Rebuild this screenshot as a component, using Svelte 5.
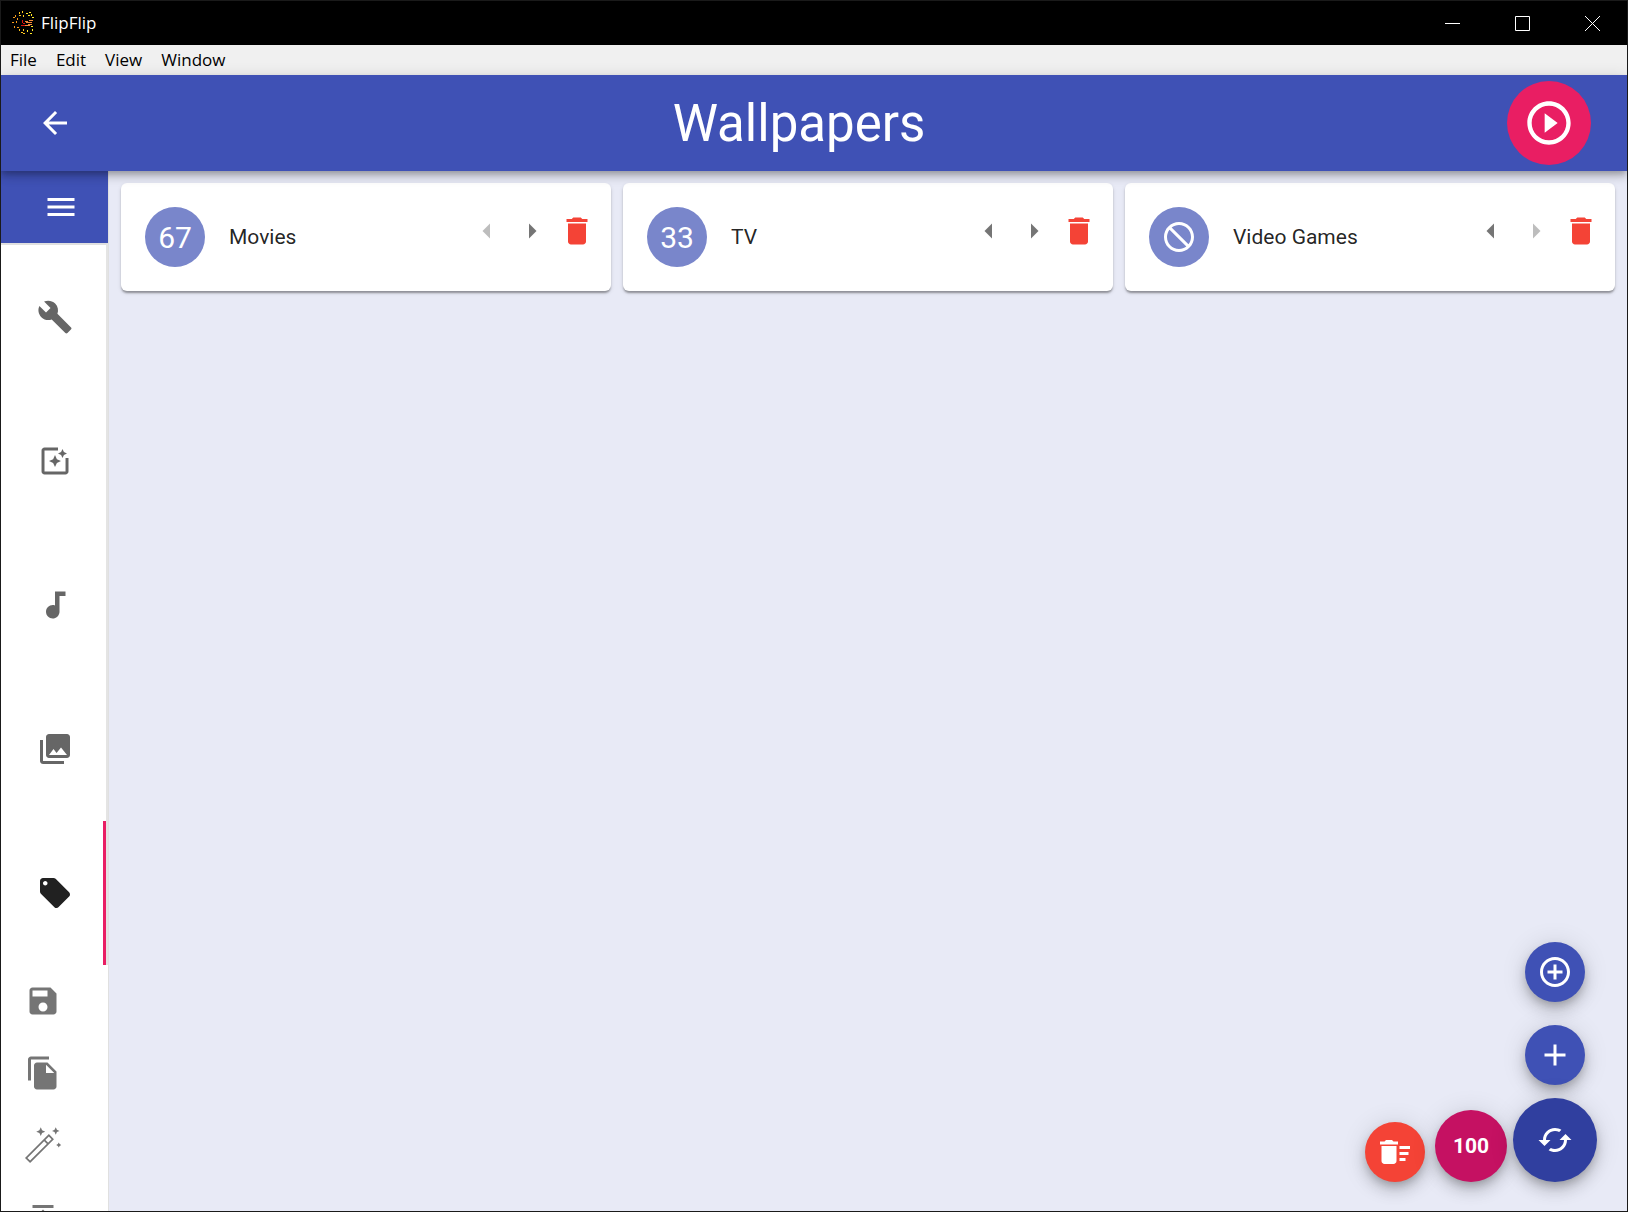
<script>
  const icons = {
    back: 'M20 11H7.83l5.59-5.59L12 4l-8 8 8 8 1.41-1.41L7.83 13H20v-2z',
    menu: 'M3 18h18v-2H3v2zm0-5h18v-2H3v2zm0-7v2h18V6H3z',
    play: 'M10 16.5l6-4.5-6-4.5v9zM12 2C6.48 2 2 6.48 2 12s4.48 10 10 10 10-4.48 10-10S17.52 2 12 2zm0 18c-4.41 0-8-3.59-8-8s3.59-8 8-8 8 3.59 8 8-3.59 8-8 8z',
    left: 'M14 7l-5 5 5 5V7z',
    right: 'M10 17l5-5-5-5v10z',
    trash: 'M6 19c0 1.1.9 2 2 2h8c1.1 0 2-.9 2-2V7H6v12zM19 4h-3.5l-1-1h-5l-1 1H5v2h14V4z',
    block: 'M12 2C17.52 2 22 6.48 22 12s-4.48 10-10 10S2 17.52 2 12 6.48 2 12 2zM20 12c0-4.42-3.58-8-8-8-1.85 0-3.55.63-4.9 1.69L18.31 16.9C19.37 15.55 20 13.85 20 12zM12 20c1.85 0 3.55-.63 4.9-1.69L5.69 7.1C4.63 8.45 4 10.15 4 12c0 4.42 3.58 8 8 8z',
    addCircle: 'M13 7h-2v4H7v2h4v4h2v-4h4v-2h-4V7zm-1-5C6.48 2 2 6.48 2 12s4.48 10 10 10 10-4.48 10-10S17.52 2 12 2zm0 18c-4.41 0-8-3.59-8-8s3.59-8 8-8 8 3.59 8 8-3.59 8-8 8z',
    add: 'M19 13h-6v6h-2v-6H5v-2h6V5h2v6h6v2z',
    cached: 'M19 8l-4 4h3c0 3.31-2.69 6-6 6-1.01 0-1.97-.25-2.8-.7l-1.46 1.46C8.97 19.54 10.43 20 12 20c4.42 0 8-3.58 8-8h3l-4-4zM6 12c0-3.31 2.69-6 6-6 1.01 0 1.97.25 2.8.7l1.46-1.46C15.03 4.46 13.57 4 12 4c-4.42 0-8 3.58-8 8H1l4 4 4-4H6z',
    sweep: 'M15 16h4v2h-4zm0-8h7v2h-7zm0 4h6v2h-6zM3 18c0 1.1.9 2 2 2h6c1.1 0 2-.9 2-2V8H3v10zM14 5h-3l-1-1H6L5 5H2v2h12z',
  };

  const tabs = [
    { name: 'Options', d: 'M22.7 19l-9.1-9.1c.9-2.3.4-5-1.5-6.9-2-2-5-2.4-7.4-1.3L9 6 6 9 1.6 4.7C.4 7.1.9 10.1 2.9 12.1c1.9 1.9 4.6 2.4 6.9 1.5l9.1 9.1c.4.4 1 .4 1.4 0l2.3-2.3c.5-.4.5-1.1.1-1.4z' },
    { name: 'Effects', d: 'M19.02 10v9H5V5h9V3H5.02c-1.1 0-2 .9-2 2v14c0 1.1.9 2 2 2H19c1.1 0 2-.9 2-2v-9h-1.98zM17 10l.94-2.06L20 7l-2.06-.94L17 4l-.94 2.06L14 7l2.06.94zm-3.75.75L12 8l-1.25 2.75L8 12l2.75 1.25L12 16l1.25-2.75L16 12z' },
    { name: 'Audio', d: 'M12 3v9.28c-.47-.17-.97-.28-1.5-.28C8.01 12 6 14.01 6 16.5S8.01 21 10.5 21c2.31 0 4.2-1.75 4.45-4H15V6h4V3h-7z' },
    { name: 'Sources', d: 'M22 16V4c0-1.1-.9-2-2-2H8c-1.1 0-2 .9-2 2v12c0 1.1.9 2 2 2h12c1.1 0 2-.9 2-2zm-11-4l2.03 2.71L16 11l4 5H8l3-4zM2 6v14c0 1.1.9 2 2 2h14v-2H4V6H2z' },
    { name: 'Weights', selected: true, d: 'M21.41 11.58l-9-9C12.05 2.22 11.55 2 11 2H4c-1.1 0-2 .9-2 2v7c0 .55.22 1.05.59 1.42l9 9c.36.36.86.58 1.41.58.55 0 1.05-.22 1.41-.59l7-7c.37-.36.59-.86.59-1.41 0-.55-.23-1.06-.59-1.42zM5.5 7C4.67 7 4 6.33 4 5.5S4.67 4 5.5 4 7 4.67 7 5.5 6.33 7 5.5 7z' },
  ];

  const wand =
    'M15.9 4.7L19.3 8.1 3.4 24 0 20.6zM15.9 6.3L1.6 20.6 3.4 22.4 17.7 8.1zM12 8.7l.8-.8 3 3-.8.8zM10.5.2l.9 2 2.1.9-2.1.9-.9 2-.9-2-2.1-.9 2.1-.9zM20.5.1l.8 1.7 1.7.8-1.7.8-.8 1.7-.8-1.7-1.7-.8 1.7-.8zM22.5 10.3l.6 1.1 1.1.6-1.1.6-.6 1.1-.6-1.1-1.1-.6 1.1-.6z';

  const actions = [
    { name: 'Save', d: 'M17 3H5c-1.11 0-2 .9-2 2v14c0 1.1.89 2 2 2h14c1.1 0 2-.9 2-2V7l-4-4zm-5 16c-1.66 0-3-1.34-3-3s1.34-3 3-3 3 1.34 3 3-1.34 3-3 3zm3-10H5V5h10v4z' },
    { name: 'Clone', d: 'M16 1H4c-1.1 0-2 .9-2 2v14h2V3h12V1zm-1 4l6 6v10c0 1.1-.9 2-2 2H7.99C6.89 23 6 22.1 6 21l.01-14c0-1.1.89-2 1.99-2h7zm-1 7h5.5L14 6.5V12z' },
    { name: 'Generate', d: wand },
    { name: 'Export', d: 'M5 4v2h14V4H5zm0 10h4v6h6v-6h4l-7-7-7 7z' },
  ];

  const cards = [
    { title: 'Movies', weight: 67, first: true },
    { title: 'TV', weight: 33 },
    { title: 'Video Games', weight: null, last: true },
  ];

  // Logo: sparks around a pointing hand, orange on the left and yellow on the right
  const sparks = [
    [11, 0], [15, 2], [8, 1], [18, 1], [20, 3], [2, 6], [5, 10], [1, 11], [3, 15],
    [6, 16], [8, 18], [10, 21], [12, 18], [12, 22], [16, 19], [19, 22], [21, 18],
    [20, 15], [6, 7], [8, 4], [12, 4], [21, 6], [4, 4], [17, 4],
  ];
</script>

{#snippet icon(d)}
  <svg class="icon" viewBox="0 0 24 24" aria-hidden="true"><path {d} /></svg>
{/snippet}

<div class="window">
  <header class="titlebar">
    <svg class="logo" viewBox="0 0 24 24" aria-hidden="true">
      {#each sparks as [x, y], i}
        <rect {x} {y} width={i % 2 ? 2 : 1} height={i % 2 ? 1 : 2} fill={x > 14 ? '#ffe928' : x > 7 ? '#ffc61e' : '#f59a1c'} />
      {/each}
      <path d="M11 9h1v3h-1zM10 14h4v1h-4zM12 12h2v1h-2z" fill="#e01010" />
      <path d="M18 9h4v1h-4zM15 11h6v1h-6zM17 13h4v1h-4zM14 10h3v1h-3zM14 14h5v1h-5z" fill="#f58a3c" />
    </svg>
    <span class="app-name">FlipFlip</span>
    <div class="controls">
      <button aria-label="Minimize"><svg viewBox="0 0 15 15"><path d="M0 7.5h15" /></svg></button>
      <button aria-label="Maximize"><svg viewBox="0 0 15 15"><path d="M.5.5h14v14H.5z" /></svg></button>
      <button aria-label="Close"><svg viewBox="0 0 15 15"><path d="M0 0l15 15M15 0L0 15" /></svg></button>
    </div>
  </header>

  <nav class="menubar">
    <button>File</button>
    <button>Edit</button>
    <button>View</button>
    <button>Window</button>
  </nav>

  <div class="appbar">
    <button class="back" aria-label="Back">{@render icon(icons.back)}</button>
    <h1>Wallpapers</h1>
    <button class="play" aria-label="Play">{@render icon(icons.play)}</button>
  </div>

  <div class="body">
    <aside class="drawer">
      <button class="toggle" aria-label="Toggle drawer">{@render icon(icons.menu)}</button>
      <div class="tabs" role="tablist">
        {#each tabs as tab}
          <button class="tab" class:selected={tab.selected} role="tab" aria-selected={!!tab.selected} aria-label={tab.name}>
            {@render icon(tab.d)}
          </button>
        {/each}
      </div>
      <div class="actions">
        {#each actions as action}
          <button class="action" aria-label={action.name}>{@render icon(action.d)}</button>
        {/each}
      </div>
    </aside>

    <main>
      <div class="cards">
        {#each cards as card}
          <article class="card">
            <button class="avatar" aria-label="Weight of {card.title}">
              {#if card.weight === null}{@render icon(icons.block)}{:else}{card.weight}{/if}
            </button>
            <h2>{card.title}</h2>
            <div class="tools">
              <button aria-label="Move {card.title} left" disabled={card.first}>{@render icon(icons.left)}</button>
              <button aria-label="Move {card.title} right" disabled={card.last}>{@render icon(icons.right)}</button>
              <button class="delete" aria-label="Delete {card.title}">{@render icon(icons.trash)}</button>
            </div>
          </article>
        {/each}
      </div>

      <div class="fabs">
        <button class="fab red" aria-label="Remove all">{@render icon(icons.sweep)}</button>
        <button class="fab total">100</button>
        <div class="stack">
          <button class="fab" aria-label="Add rule">{@render icon(icons.addCircle)}</button>
          <button class="fab" aria-label="Add">{@render icon(icons.add)}</button>
          <button class="fab large" aria-label="Update">{@render icon(icons.cached)}</button>
        </div>
      </div>
    </main>
  </div>
</div>

<style>
  :global(body) {
    margin: 0;
  }

  .window,
  .window * {
    box-sizing: border-box;
  }

  .window {
    display: flex;
    flex-direction: column;
    height: 100vh;
    overflow: hidden;
    border: 1px solid #1a1a1a;
    font-family: Roboto, sans-serif;
    color: rgba(0, 0, 0, 0.87);
    background: #e8eaf6;
  }

  button {
    display: flex;
    align-items: center;
    justify-content: center;
    flex: none;
    margin: 0;
    padding: 0;
    border: 0;
    background: none;
    color: inherit;
    font: inherit;
  }

  h1,
  h2 {
    margin: 0;
    font-weight: 400;
  }

  .icon {
    display: block;
    width: 36px;
    height: 36px;
    fill: currentColor;
    overflow: visible;
  }

  .titlebar {
    display: flex;
    flex: none;
    align-items: center;
    height: 44px;
    padding-left: 10px;
    background: #000;
    color: #fff;
    font: 17px 'Open Sans', sans-serif;
  }

  .app-name {
    padding-bottom: 2px;
  }

  .logo {
    width: 24px;
    height: 24px;
    margin-right: 6px;
    shape-rendering: crispEdges;
  }

  .controls {
    display: flex;
    height: 100%;
    margin-left: auto;
  }

  .controls button {
    width: 70px;
  }

  .controls svg {
    width: 15px;
    height: 15px;
    fill: none;
    stroke: #fff;
  }

  .menubar {
    display: flex;
    flex: none;
    gap: 1px;
    height: 30px;
    background: #f0f0f0;
    color: #000;
    font: 17px 'Open Sans', sans-serif;
  }

  .menubar button {
    padding: 0 9px 2px;
  }

  .appbar {
    position: relative;
    z-index: 2;
    display: flex;
    flex: none;
    align-items: center;
    height: 96px;
    padding: 0 36px 0 27px;
    background: #3f51b5;
    color: #fff;
    box-shadow:
      0 3px 6px -1px rgba(0, 0, 0, 0.2),
      0 6px 8px rgba(0, 0, 0, 0.14),
      0 2px 15px rgba(0, 0, 0, 0.12);
  }

  .back {
    width: 54px;
    height: 54px;
    margin-right: 9px;
  }

  h1 {
    flex: 1;
    padding-top: 2px;
    font-size: 51px;
    line-height: 60px;
    text-align: center;
  }

  .play {
    width: 84px;
    height: 84px;
    border-radius: 50%;
    background: #e91e63;
  }

  .play .icon,
  .play :global(svg) {
    width: 52px;
    height: 52px;
  }

  .body {
    display: flex;
    flex: 1;
    min-height: 0;
  }

  .drawer {
    display: flex;
    flex: none;
    flex-direction: column;
    width: 108px;
    overflow: hidden;
    border-right: 1px solid #e0e0e0;
    background: #fff;
  }

  .toggle {
    height: 72px;
    padding-left: 12px;
    background: #3f51b5;
    color: #fff;
  }

  .tabs {
    flex: none;
    border-top: 2px solid #e0e0e0;
    border-right: 2px solid #e4e4e4;
  }

  .tab {
    width: 100%;
    height: 144px;
    border-right: 3px solid transparent;
    padding-left: 5px;
    color: rgba(0, 0, 0, 0.6);
  }

  .tab.selected {
    border-right-color: #e91e63;
    color: #212121;
  }

  .action {
    justify-content: flex-start;
    width: 100%;
    height: 72px;
    padding-left: 24px;
    color: rgba(0, 0, 0, 0.54);
  }

  main {
    position: relative;
    flex: 1;
    min-width: 0;
  }

  .cards {
    display: grid;
    grid-template-columns: repeat(3, 1fr);
    gap: 12px;
    padding: 12px;
  }

  .card {
    display: flex;
    align-items: center;
    gap: 24px;
    padding: 24px 12px 24px 24px;
    border-radius: 6px;
    background: #fff;
    box-shadow:
      0 3px 2px -1px rgba(0, 0, 0, 0.2),
      0 2px 2px rgba(0, 0, 0, 0.14),
      0 2px 4px rgba(0, 0, 0, 0.12);
  }

  .avatar {
    width: 60px;
    height: 60px;
    border-radius: 50%;
    background: #7986cb;
    color: #fff;
    font-size: 30px;
  }

  h2 {
    flex: 1;
    font-size: 21px;
    line-height: 30px;
  }

  .tools {
    display: flex;
    align-items: center;
    align-self: flex-start;
    height: 48px;
    color: rgba(0, 0, 0, 0.54);
  }

  .tools button {
    width: 45px;
    height: 45px;
  }

  .tools button:disabled {
    color: rgba(0, 0, 0, 0.26);
  }

  .tools .delete {
    color: #f44336;
  }

  .fabs {
    position: absolute;
    right: 30px;
    bottom: 29px;
    display: flex;
    align-items: flex-end;
  }

  .stack {
    display: flex;
    flex-direction: column;
    align-items: center;
    margin-left: 6px;
  }

  .stack .fab {
    margin-bottom: 23px;
  }

  .fab {
    width: 60px;
    height: 60px;
    border-radius: 50%;
    background: #3f51b5;
    color: #fff;
    box-shadow:
      0 5px 8px -2px rgba(0, 0, 0, 0.2),
      0 9px 15px rgba(0, 0, 0, 0.14),
      0 2px 27px rgba(0, 0, 0, 0.12);
  }

  .fab.red {
    background: #f44336;
  }

  .fab.total {
    width: 72px;
    height: 72px;
    margin-left: 10px;
    background: #c51162;
    font-size: 21px;
    font-weight: 700;
  }

  .stack .fab.large {
    width: 84px;
    height: 84px;
    margin: -10px 0 0;
    background: #303f9f;
  }
</style>
